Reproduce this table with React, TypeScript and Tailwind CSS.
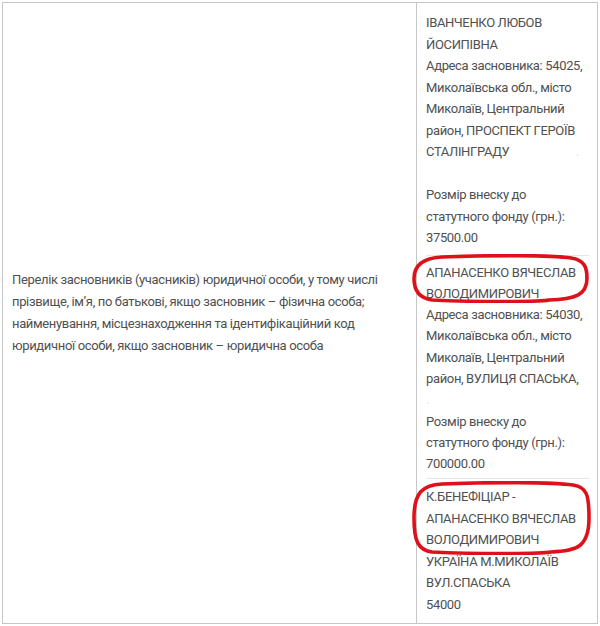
const Ring = ({ w, h, top }: { w: number; h: number; top: number }) => (
  <svg
    className="pointer-events-none absolute"
    style={{ left: -14, top }}
    width={w}
    height={h}
    viewBox={`0 0 ${w} ${h}`}
    fill="none"
  >
    <path
      d={`M 30 3 C 80 1, 140 1, ${w - 18} 4 C ${w - 4} 6, ${w - 2} 14, ${w - 2} ${h / 2} C ${w - 2} ${h - 8}, ${w - 14} ${h - 4}, ${w - 40} ${h - 3} C 130 ${h - 1}, 60 ${h - 1}, 20 ${h - 3} C 6 ${h - 5}, 2 ${h - 14}, 2 ${h / 2} C 2 12, 10 4, 30 3 Z`}
      stroke="#e0101a"
      strokeWidth="3.6"
    />
  </svg>
)

const Lines = ({ items }: { items: string[] }) => (
  <>
    {items.map((t, i) => (
      <p key={i} className="whitespace-nowrap">
        {t}
      </p>
    ))}
  </>
)

export default function App() {
  return (
    <div className="w-[600px] h-[626px] bg-white pt-[2px] pl-[2px] font-['Roboto',sans-serif] text-[13px] tracking-[-0.35px] text-[#505050]">
      <div className="w-[596px] h-[622px] border border-[#c6c6c6] flex">
        <div className="w-[414px] border-r border-[#c6c6c6] flex items-center pl-[9px] pr-[8px] leading-[22px]">
          <p>
            Перелік засновників (учасників) юридичної особи, у тому числі прізвище, ім’я, по батькові, якщо засновник
            – фізична особа; найменування, місцезнаходження та ідентифікаційний код юридичної особи, якщо засновник –
            юридична особа
          </p>
        </div>
        <div className="w-[180px] pl-[9px] pr-[8px] pt-[9px] leading-[21.5px]">
          <div className="pb-[6px] border-b border-[#e6e6e6]">
            <Lines
              items={[
                'ІВАНЧЕНКО ЛЮБОВ',
                'ЙОСИПІВНА',
                'Адреса засновника: 54025,',
                'Миколаївська обл., місто',
                'Миколаїв, Центральний',
                'район, ПРОСПЕКТ ГЕРОЇВ',
              ]}
            />
            <p className="flex justify-between whitespace-nowrap">
              <span>СТАЛІНГРАДУ</span>
              <span className="text-[#ddd] pr-[10px]">.</span>
            </p>
            <p className="h-[21.5px]" />
            <Lines items={['Розмір внеску до', 'статутного фонду (грн.):', '37500.00']} />
          </div>
          <div className="pt-[6px] pb-[4px] border-b border-[#e6e6e6] leading-[21.3px]">
            <div className="relative">
              <Lines items={['АПАНАСЕНКО ВЯЧЕСЛАВ', 'ВОЛОДИМИРОВИЧ']} />
              <Ring w={177} h={49} top={-8} />
            </div>
            <Lines
              items={[
                'Адреса засновника: 54030,',
                'Миколаївська обл., місто',
                'Миколаїв, Центральний',
                'район, ВУЛИЦЯ СПАСЬКА,',
              ]}
            />
            <p className="text-[#ddd]">.</p>
            <Lines items={['Розмір внеску до', 'статутного фонду (грн.):', '700000.00']} />
          </div>
          <div className="pt-[7px] leading-[21.4px]">
            <div className="relative">
              <Lines items={['К.БЕНЕФІЦІАР -', 'АПАНАСЕНКО ВЯЧЕСЛАВ', 'ВОЛОДИМИРОВИЧ']} />
              <Ring w={179} h={74} top={-5} />
            </div>
            <Lines items={['УКРАЇНА М.МИКОЛАЇВ', 'ВУЛ.СПАСЬКА', '54000']} />
          </div>
        </div>
      </div>
    </div>
  )
}
